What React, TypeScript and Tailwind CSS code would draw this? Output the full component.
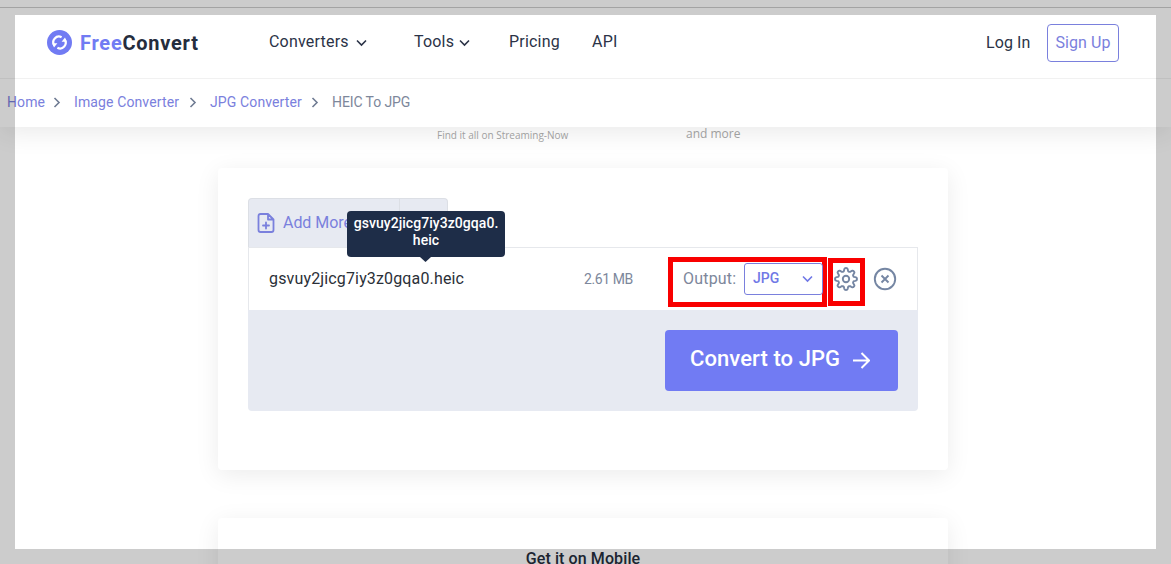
import React from "react";

const Chevron = ({ className, d = "M1 1.5 5.5 6 10 1.5", box = "0 0 11 8" }: { className: string; d?: string; box?: string }) => (
  <svg className={className} viewBox={box} fill="none" stroke="currentColor" strokeWidth="1.6">
    <path d={d} />
  </svg>
);

const Crumb = ({ children, className }: { children: string; className: string }) => (
  <>
    <a className={`block whitespace-nowrap text-[#7a80dd] ${className}`}>{children}</a>
    <Chevron className="mr-[13px] h-[11px] w-[8px] shrink-0 text-[#6f7b93]" d="M1.5 1 6 5.5 1.5 10" box="0 0 8 11" />
  </>
);

// Eight-toothed outline sampled around the centre of a 24px box.
const gearOutline =
  Array.from({ length: 96 }, (_, i) => {
    const a = (i / 96) * Math.PI * 2;
    const r = 9.4 + 1.6 * Math.tanh(2 * Math.cos(a * 8));
    return `${i ? "L" : "M"}${(12 + r * Math.cos(a)).toFixed(2)} ${(12 + r * Math.sin(a)).toFixed(2)}`;
  }).join("") + "Z";

function Header() {
  return (
    <header className="relative z-10 h-[127px] shrink-0 bg-white shadow-[0_5px_25px_rgba(0,0,0,0.09)]">
      <div className="flex h-[79px] items-start border-b border-[#f1f1f1] pl-[47px] pt-6">
        <div className="flex w-[222px] items-center pt-[6px]">
          <svg className="h-[25px] w-[25px]" viewBox="0 0 25 25">
            <circle cx="12.5" cy="12.5" r="12.5" fill="#717bf3" />
            <g fill="none" stroke="#fff" strokeWidth="2.2">
              <path d="M7.4 15.5A5.6 5.6 0 0 1 14.6 7.3" />
              <path d="M17.6 9.5A5.6 5.6 0 0 1 10.4 17.7" />
            </g>
            <path d="M5.200 13.200h5.200l-3.400 4.300zM19.800 11.800h-5.200l3.400-4.300z" fill="#fff" />
          </svg>
          <div className="ml-2 text-xl font-bold leading-6 tracking-[0.75px] text-[#252d3d]">
            <span className="text-[#717bf3]">Free</span>Convert
          </div>
        </div>
        <nav className="flex h-9 items-center text-base tracking-[0.2px] text-[#2b3347]">
          <a className="w-[87px]">Converters</a>
          <Chevron className="mr-[47px] mt-0.5 h-2 w-[11px]" />
          <a className="w-[45px]">Tools</a>
          <Chevron className="mr-[39px] mt-0.5 h-2 w-[11px]" />
          <a className="w-[83px]">Pricing</a>
          <a>API</a>
        </nav>
        <div className="ml-auto mr-[52px] flex items-center text-base tracking-[0.1px]">
          <a className="w-[61px] whitespace-nowrap text-[#2b3347]">Log In</a>
          <a className="flex h-[38px] w-[72px] items-center justify-center whitespace-nowrap rounded border border-[#7a80dd] text-[#7a80dd]">Sign Up</a>
        </div>
      </div>
      <div className="flex h-[46px] items-center pl-[7px] text-sm tracking-[0.12px]">
        <Crumb className="w-[46px]">Home</Crumb>
        <Crumb className="w-[115px]">Image Converter</Crumb>
        <Crumb className="w-[101px]">JPG Converter</Crumb>
        <span className="whitespace-nowrap tracking-[-0.1px] text-[#7d879b]">HEIC To JPG</span>
      </div>
    </header>
  );
}

function FileRow() {
  return (
    <div className="flex h-[63px] items-center border border-b-0 border-[#e6e8ec] bg-white pl-5">
      <div className="relative w-[315px]">
        <span className="text-base tracking-[0.15px] text-[#2b3038]">gsvuy2jicg7iy3z0gqa0.heic</span>
        <div className="absolute -top-[56px] left-[78px] z-20 flex h-[46px] w-[158px] flex-col items-center justify-center rounded bg-[#1e2d48] pb-[4px] text-center text-sm font-medium leading-[17px] tracking-[0.05px] text-white">
          <span>gsvuy2jicg7iy3z0gqa0.</span>
          <span>heic</span>
          <svg className="absolute left-[73px] top-[46px] h-[5px] w-[11px]" viewBox="0 0 11 5">
            <path d="M0 0h11L5.5 5z" fill="#1e2d48" />
          </svg>
        </div>
      </div>
      <span className="w-[84px] whitespace-nowrap text-sm tracking-[-0.4px] text-[#7d879b]">2.61 MB</span>
      <div className="mt-[6px] flex h-[50px] w-[159px] shrink-0 items-center border-[5px] border-[#f90000] pb-[6px] pl-[10px]">
        <span className="w-[61px] shrink-0 whitespace-nowrap pb-px text-base tracking-[0.2px] text-[#7d879b]">Output:</span>
        <button className="flex h-8 w-[79px] shrink-0 items-center rounded-[3px] border border-[#7a80dd] pl-2 text-sm font-medium text-[#7078e6]">
          <span className="pb-[2px]">JPG</span>
          <Chevron className="ml-auto mr-[9px] h-2 w-[11px]" />
        </button>
      </div>
      <div className="ml-px mt-[5px] flex h-[48px] w-[37px] shrink-0 items-center justify-center border-[5px] border-[#f90000] pb-[5px] pr-px text-[#7586a3]">
        <svg className="h-6 w-6 shrink-0" viewBox="0 0 24 24" fill="none" stroke="currentColor" strokeWidth="1.9" strokeLinejoin="round">
          <circle cx="12" cy="12" r="3.2" />
          <path d={gearOutline} />
        </svg>
      </div>
      <svg className="ml-2 h-6 w-6 shrink-0 text-[#7586a3]" viewBox="0 0 24 24" fill="none" stroke="currentColor" strokeWidth="1.9">
        <circle cx="12" cy="12" r="10.2" />
        <path d="m8.5 8.5 7 7m0-7-7 7" />
      </svg>
    </div>
  );
}

function Converter() {
  return (
    <section className="ml-[218px] mt-4 h-[302px] w-[730px] shrink-0 rounded bg-white px-[30px] pt-[30px] shadow-[0_5px_25px_rgba(0,0,0,0.08)]">
      <div className="flex h-[49px] w-[200px] rounded-t border border-b-0 border-[#dcdfe5] bg-[#e7eaf2]">
        <button className="flex w-[151px] items-center border-r border-[#dcdfe5] pb-px pl-2 text-base tracking-[-0.05px] text-[#7a80dd]">
          <svg className="mr-2 h-5 w-[18px]" viewBox="0 0 18 20" fill="none" stroke="currentColor" strokeWidth="1.8" strokeLinejoin="round" strokeLinecap="round">
            <path d="M11 1H3.5Q1.500 1 1.500 3v14q0 2 2 2h11q2 0 2-2V6.500ZM11 1v5.500h5.500M9 9.500v6M6 12.500h6" />
          </svg>
          Add More
        </button>
      </div>
      <FileRow />
      <div className="flex h-[101px] justify-end rounded-b bg-[#e7eaf2] pr-5 pt-5">
        <button className="flex h-[61px] w-[233px] items-center rounded bg-[#717bf3] pb-[4px] pl-[25px] text-[22px] font-medium tracking-[0.08px] text-white">
          Convert to JPG
          <svg className="ml-[13px] mt-[3px] h-[17px] w-[17px]" viewBox="0 0 17 17" fill="none" stroke="currentColor" strokeWidth="2">
            <path d="M0 8.500h15.500M8.500 1 16 8.500 8.500 16" />
          </svg>
        </button>
      </div>
    </section>
  );
}

export default function App() {
  return (
    <div className="relative flex h-[564px] w-[1171px] flex-col overflow-hidden bg-white font-['Roboto',sans-serif]">
      <Header />
      <div className="flex h-[25px] shrink-0 items-start pl-[437px] font-['Open_Sans',sans-serif] text-[#a6a6a6]">
        <span className="w-[249px] pt-px text-[10px] leading-[14px]">Find it all on Streaming-Now</span>
        <span className="text-xs leading-[14px]">and more</span>
      </div>
      <Converter />
      <section className="ml-[218px] mt-12 h-[80px] w-[730px] shrink-0 rounded bg-white pt-[31px] text-center text-base font-medium leading-5 tracking-[0.1px] text-[#252d3d] shadow-[0_5px_25px_rgba(0,0,0,0.08)]">
        Get it on Mobile
      </section>
      <div className="pointer-events-none absolute inset-0 z-30 border-[15px] border-black/20">
        <div className="absolute -left-[15px] -top-2 h-px w-[1171px] bg-black/20" />
      </div>
    </div>
  );
}
